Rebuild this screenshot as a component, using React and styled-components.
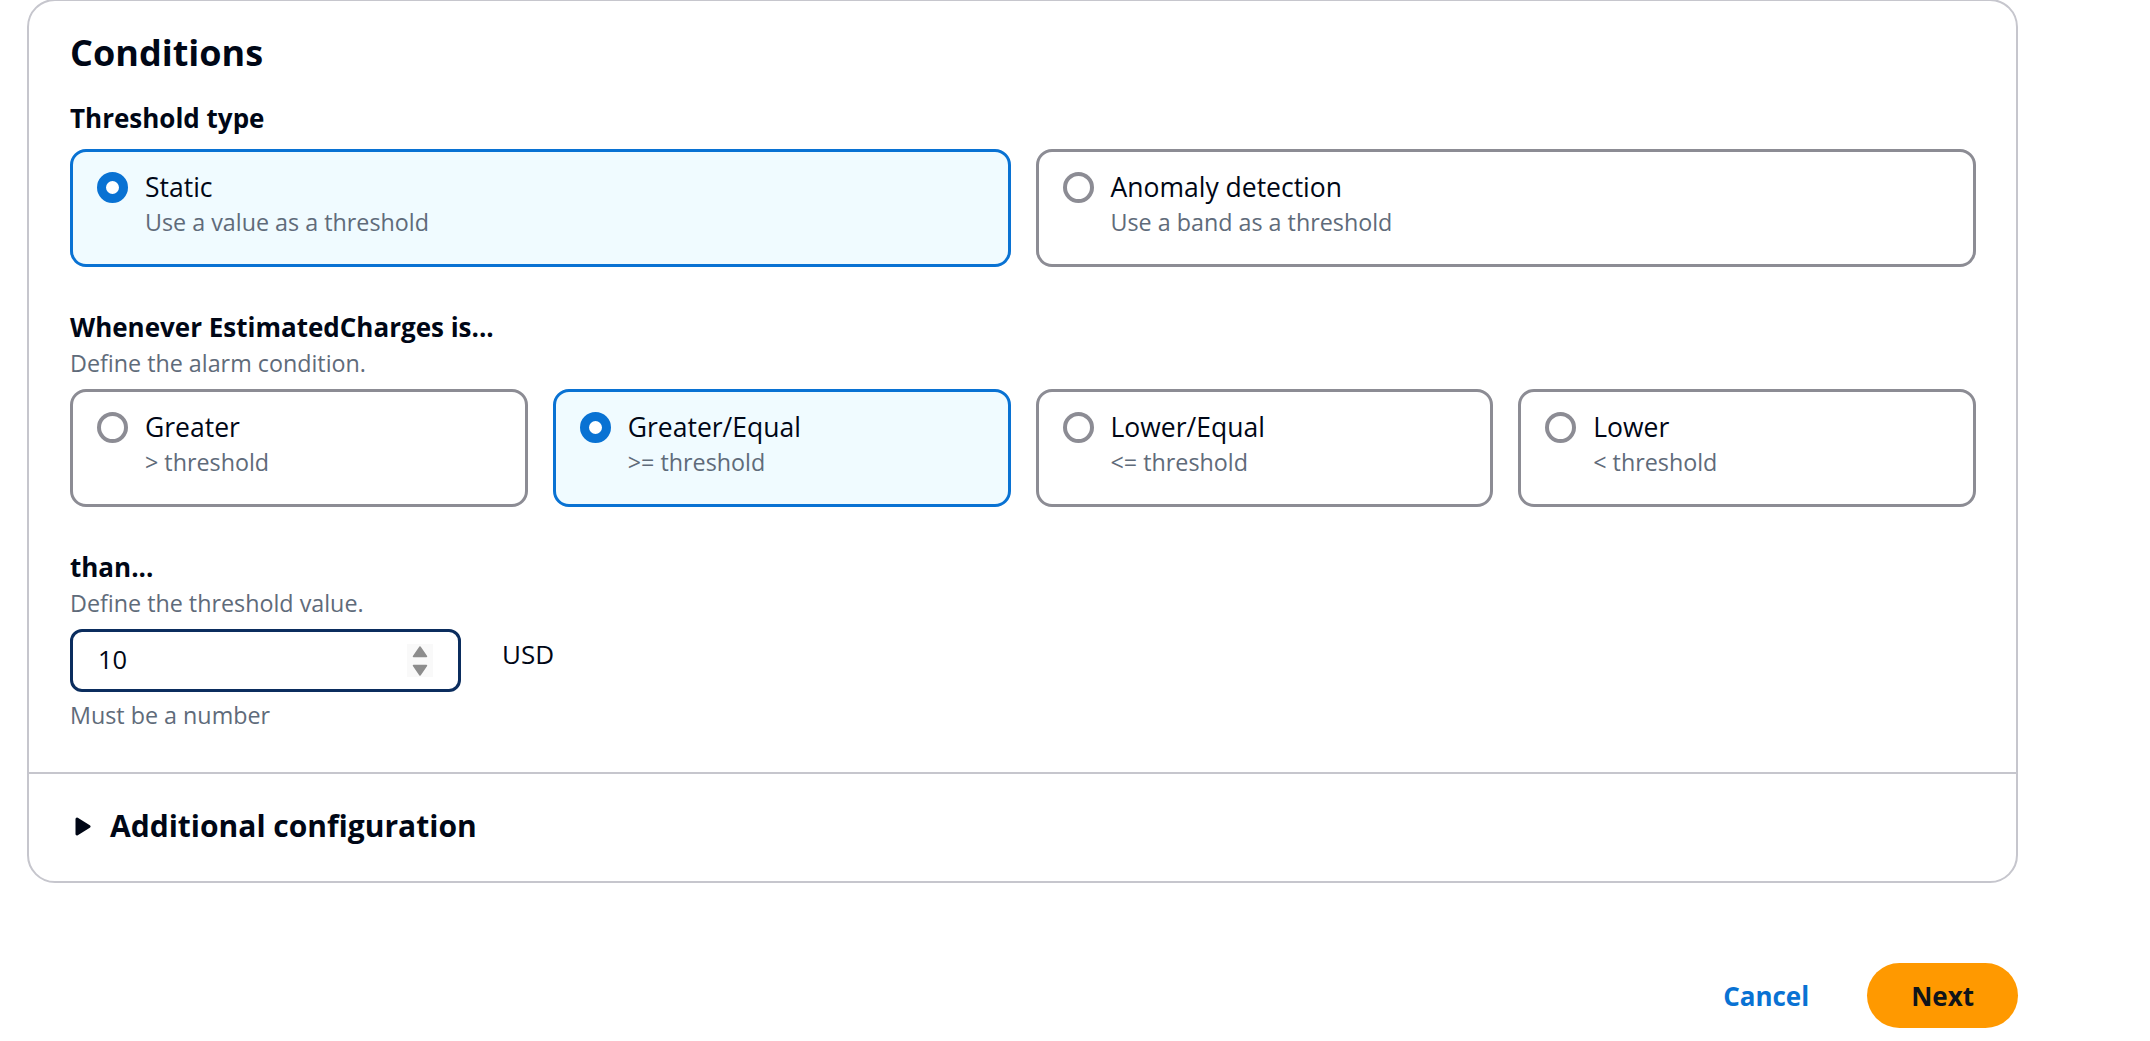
import React from 'react'
import styled, { createGlobalStyle } from 'styled-components'

const GlobalStyle = createGlobalStyle`
    body {
        margin: 0;
        background: #ffffff;
        font-family: "Open Sans", "Noto Sans", sans-serif;
        color: #000716;
    }
`

const thresholdTypes = [
    { title: 'Static', desc: 'Use a value as a threshold', checked: true },
    { title: 'Anomaly detection', desc: 'Use a band as a threshold', checked: false },
]

const operators = [
    { title: 'Greater', desc: '> threshold', checked: false },
    { title: 'Greater/Equal', desc: '>= threshold', checked: true },
    { title: 'Lower/Equal', desc: '<= threshold', checked: false },
    { title: 'Lower', desc: '< threshold', checked: false },
]

function RadioTile({ title, desc, checked }) {
    return (
        <Tile $checked={checked}>
            <Radio $checked={checked} />
            <div>
                <TileTitle>{title}</TileTitle>
                <TileDesc>{desc}</TileDesc>
            </div>
        </Tile>
    )
}

function App() {
    return (
        <Page>
            <GlobalStyle />
            <Card>
                <CardBody>
                    <Heading>Conditions</Heading>

                    <FieldLabel $top={23}>Threshold type</FieldLabel>
                    <TileGrid $cols={2} $top={13}>
                        {thresholdTypes.map((t) => <RadioTile key={t.title} {...t} />)}
                    </TileGrid>

                    <FieldLabel $top={42}>Whenever EstimatedCharges is...</FieldLabel>
                    <FieldHint>Define the alarm condition.</FieldHint>
                    <TileGrid $cols={4} $top={10}>
                        {operators.map((o) => <RadioTile key={o.title} {...o} />)}
                    </TileGrid>

                    <FieldLabel $top={42}>than...</FieldLabel>
                    <FieldHint>Define the threshold value.</FieldHint>
                    <InputRow>
                        <InputBox>
                            <InputValue>10</InputValue>
                            <Spinner>
                                <svg width="16" height="32" viewBox="0 0 16 32">
                                    <path d="M8 2 L14.5 11.5 L1.5 11.5 Z" fill="#8d8d8d" stroke="#8d8d8d" strokeWidth="1.5" strokeLinejoin="round" />
                                    <path d="M8 30 L14.5 20.5 L1.5 20.5 Z" fill="#8d8d8d" stroke="#8d8d8d" strokeWidth="1.5" strokeLinejoin="round" />
                                </svg>
                            </Spinner>
                        </InputBox>
                        <Unit>USD</Unit>
                    </InputRow>
                    <Constraint>Must be a number</Constraint>
                </CardBody>

                <Expander>
                    <svg width="16" height="19" viewBox="0 0 16 19">
                        <path d="M2 2 L14 9.5 L2 17 Z" fill="#000716" stroke="#000716" strokeWidth="3" strokeLinejoin="round" />
                    </svg>
                    <span>Additional configuration</span>
                </Expander>
            </Card>

            <Actions>
                <LinkButton>Cancel</LinkButton>
                <PrimaryButton>Next</PrimaryButton>
            </Actions>
        </Page>
    )
}

export default App

const Page = styled.div`
    width: 1991px;
    padding-left: 27px;
`
const Card = styled.section`
    box-sizing: border-box;
    width: 100%;
    margin-top: -1px;
    border: 2px solid #c6c6cd;
    border-radius: 28px;
    background: #ffffff;
`
const CardBody = styled.div`
    padding: 28px 40px 41px 41px;
`
const Heading = styled.h2`
    margin: 0;
    font-size: 36px;
    font-weight: 700;
    line-height: 48px;
    color: #000716;
`
const FieldLabel = styled.div`
    margin-top: ${(p) => p.$top}px;
    font-size: 26px;
    font-weight: 700;
    line-height: 36px;
`
const FieldHint = styled.div`
    margin-top: 2px;
    font-size: 23.3px;
    line-height: 32px;
    color: #5f6b7a;
`
const TileGrid = styled.div`
    display: grid;
    grid-template-columns: repeat(${(p) => p.$cols}, 1fr);
    gap: 25px;
    margin-top: ${(p) => p.$top}px;
`
const Tile = styled.div`
    display: flex;
    gap: 17px;
    box-sizing: border-box;
    height: 118px;
    padding: 17px 24px 0 24px;
    border: 3px solid ${(p) => (p.$checked ? '#0972d3' : '#8c8c94')};
    border-radius: 16px;
    background: ${(p) => (p.$checked ? '#f0fbff' : '#ffffff')};
`
const Radio = styled.span`
    flex: none;
    box-sizing: border-box;
    width: 31px;
    height: 31px;
    margin-top: 3px;
    border-radius: 50%;
    background: #ffffff;
    border: ${(p) => (p.$checked ? '9px solid #0972d3' : '4px solid #8c8c94')};
`
const TileTitle = styled.div`
    font-size: 26.5px;
    line-height: 36px;
    color: #000716;
`
const TileDesc = styled.div`
    margin-top: 1px;
    font-size: 23.3px;
    line-height: 32px;
    color: #5f6b7a;
`
const InputRow = styled.div`
    display: flex;
    align-items: flex-start;
    gap: 41px;
    margin-top: 10px;
`
const InputBox = styled.div`
    display: flex;
    align-items: center;
    justify-content: space-between;
    box-sizing: border-box;
    width: 391px;
    height: 63px;
    padding: 0 25px 0 25px;
    border: 3px solid #0b2d5e;
    border-radius: 12px;
`
const InputValue = styled.span`
    padding-bottom: 3px;
    font-size: 25.5px;
    color: #000716;
`
const Spinner = styled.span`
    display: flex;
    align-items: center;
    justify-content: center;
    width: 26px;
    height: 33px;
    background: #f9f9f9;
`
const Unit = styled.div`
    padding-top: 7px;
    font-size: 26px;
    line-height: 36px;
`
const Constraint = styled.div`
    margin-top: 7px;
    font-size: 23.3px;
    line-height: 32px;
    color: #5f6b7a;
`
const Expander = styled.div`
    display: flex;
    align-items: center;
    gap: 19px;
    padding: 32px 40px 35px 46px;
    border-top: 2px solid #c6c6cd;
    font-size: 30px;
    font-weight: 700;
    line-height: 40px;
`
const Actions = styled.div`
    display: flex;
    justify-content: flex-end;
    align-items: center;
    gap: 38px;
    margin-top: 80px;
`
const LinkButton = styled.button`
    height: 65px;
    padding: 0 20px;
    border: none;
    background: none;
    font-family: inherit;
    font-size: 26px;
    font-weight: 700;
    color: #0972d3;
    cursor: pointer;
`
const PrimaryButton = styled.button`
    height: 65px;
    padding: 0 44px;
    border: none;
    border-radius: 33px;
    background: #ff9900;
    font-family: inherit;
    font-size: 26px;
    font-weight: 700;
    color: #0f141a;
    cursor: pointer;
`
